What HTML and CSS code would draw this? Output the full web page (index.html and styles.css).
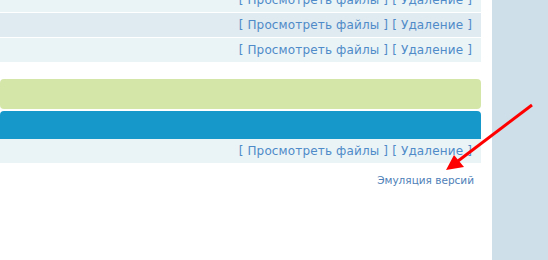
FILE: index.html
```html
<!DOCTYPE html>
<html>
<head>
    <meta charset="UTF-8">
    <title>Файлы</title>
    <link rel="stylesheet" href="styles.css">
</head>
<body>
    <div class="page">
        <div class="main">
            <div class="row row-top light"><span class="links">[ <a href="#">Просмотреть файлы</a> ] [ <a href="#">Удаление</a> ]</span></div>
            <div class="row mid"><span class="links">[ <a href="#">Просмотреть файлы</a> ] [ <a href="#">Удаление</a> ]</span></div>
            <div class="row light"><span class="links">[ <a href="#">Просмотреть файлы</a> ] [ <a href="#">Удаление</a> ]</span></div>
            <div class="green-bar"></div>
            <div class="blue-bar"></div>
            <div class="row light"><span class="links">[ <a href="#">Просмотреть файлы</a> ] [ <a href="#">Удаление</a> ]</span></div>
            <div class="emulation"><a href="#">Эмуляция версий</a></div>
        </div>
        <div class="sidebar"></div>
    </div>
    <!-- red arrow pointing at the link -->
    <svg class="arrow" width="548" height="260" viewBox="0 0 548 260">
        <line x1="532" y1="105" x2="458" y2="161" stroke="#ff0000" stroke-width="3"/>
        <polygon points="446,170 454,155 464,167" fill="#ff0000"/>
    </svg>
</body>
</html>
```
FILE: styles.css
```css
body {
    margin: 0;
    background-color: #ffffff;
    font-family: "DejaVu Sans", Verdana, sans-serif;
}
.page {
    display: flex;
    height: 260px;
    overflow: hidden;
}
.main {
    width: 481px;
    margin-right: 11px;
}
.sidebar {
    flex: 1;
    background-color: #cedfe9;
}
.row {
    height: 24px;
    margin-bottom: 1px;
    display: flex;
    align-items: center;
    justify-content: flex-end;
    padding-right: 9px;
    font-size: 12px;
    letter-spacing: 0.15px;
    color: #4f8bc8;
}
.row-top {
    margin-top: -12px;
}
.light {
    background-color: #eaf4f7;
}
.mid {
    background-color: #dfeaf1;
}
.links a {
    color: #4f8bc8;
    text-decoration: none;
}
.green-bar {
    margin-top: 17px;
    height: 30px;
    background-color: #d5e6a9;
    border-radius: 4px;
    margin-bottom: 2px;
}
.blue-bar {
    height: 28px;
    background-color: #1798cb;
    border-radius: 4px 4px 0 0;
}
.emulation {
    text-align: right;
    padding-right: 7px;
    margin-top: 11px;
    font-size: 10.5px;
}
.emulation a {
    color: #4f7fb8;
    text-decoration: none;
}
.arrow {
    position: absolute;
    left: 0;
    top: 0;
    pointer-events: none;
}
```
